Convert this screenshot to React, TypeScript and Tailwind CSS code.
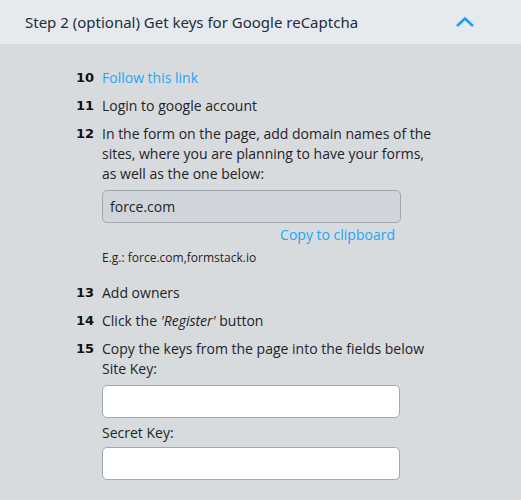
export default function App() {
  const font = { fontFamily: '"Open Sans", "Noto Sans", sans-serif' };
  return (
    <div className="w-[521px] h-[500px] bg-[#d8dbde] text-[#1f2327] overflow-hidden" style={font}>
      {/* Accordion header */}
      <div className="h-[44px] bg-[#e6eaee] flex items-center justify-between pl-[25px] pr-[46px]">
        <span className="text-[15px] text-[#1e2d3b] font-['Noto_Sans',sans-serif]">
          Step 2 (optional) Get keys for Google reCaptcha
        </span>
        <svg width="20" height="12" viewBox="0 0 20 12" fill="none">
          <path d="M2 10 L10 2.5 L18 10" stroke="#16a2f4" strokeWidth="2.6" />
        </svg>
      </div>

      <div className="pt-[24px] pl-[76px] pr-[82px]">
        <ol className="flex flex-col">
          <Step n="10">
            <a className="text-[#1ea5f6]">Follow this link</a>
          </Step>
          <Step n="11" className="mt-[8px]">Login to google account</Step>
          <Step n="12" className="mt-[8px]">
            <div>
              In the form on the page, add domain names of the sites, where you are planning to have your forms, as well
              as the one below:
            </div>
            <div className="mt-[6px] w-[299px]">
              <div className="h-[33px] rounded-[5px] border border-[#a2a8ad] bg-[#cfd5da] flex items-center px-[7px] text-[14px]">
                force.com
              </div>
              <div className="text-right pr-[6px] text-[#1ea5f6] text-[14px] leading-[20px] mt-[2px]">
                Copy to clipboard
              </div>
              <div className="text-[12px] leading-[18px] mt-[4px]">E.g.: force.com,formstack.io</div>
            </div>
          </Step>
          <Step n="13" className="mt-[16px]">Add owners</Step>
          <Step n="14" className="mt-[8px]">
            Click the <i>'Register'</i> button
          </Step>
          <Step n="15" className="mt-[8px]">
            <div>Copy the keys from the page into the fields below</div>
            <div>Site Key:</div>
            <div className="mt-[6px] w-[298px] h-[33px] rounded-[5px] border border-[#a2a8ad] bg-white" />
            <div className="mt-[5px]">Secret Key:</div>
            <div className="mt-[4px] w-[298px] h-[33px] rounded-[5px] border border-[#a2a8ad] bg-white" />
          </Step>
        </ol>
      </div>
    </div>
  );
}

function Step({ n, children, className = '' }: { n: string; children: React.ReactNode; className?: string }) {
  return (
    <li className={`flex text-[14px] leading-[20px] ${className}`}>
      <span className="w-[26px] shrink-0 font-['DejaVu_Sans',sans-serif] font-bold text-[13px] text-[#111]">{n}</span>
      <div className="flex-1">{children}</div>
    </li>
  );
}
